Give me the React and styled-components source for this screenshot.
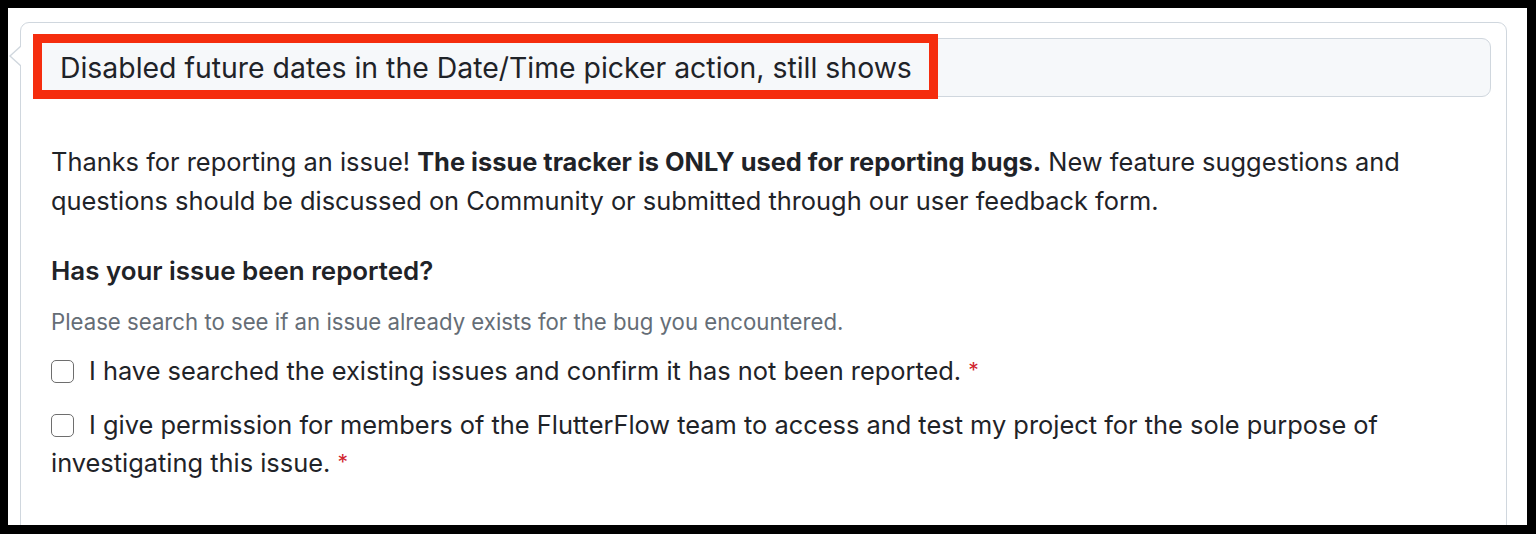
import React from "react";
import styled, { createGlobalStyle } from "styled-components";

const Global = createGlobalStyle`
  html, body { margin: 0; padding: 0; background: #000; }
  body { font-family: Inter, "Liberation Sans", sans-serif; color: #1f2328; }
`;

const Frame = styled.div`
  width: 1536px;
  height: 534px;
  box-sizing: border-box;
  padding: 8px 9px 9px 8px;
  background: #000;
`;

const Sheet = styled.div`
  height: 100%;
  background: #fff;
  overflow: hidden;
  padding: 14px 20px 0 12px;
  box-sizing: border-box;
`;

const Card = styled.div`
  position: relative;
  border: 1px solid #d0d7de;
  border-radius: 9px;
  padding: 15px 15px 40px 16px;
  background: #fff;
  min-height: 560px;
  box-sizing: border-box;

  &::before,
  &::after {
    content: "";
    position: absolute;
    top: 22px;
    width: 0;
    height: 0;
    border-style: solid;
  }
  &::before {
    left: -12px;
    border-width: 11px 12px 11px 0;
    border-color: transparent #d0d7de transparent transparent;
  }
  &::after {
    left: -10px;
    top: 23px;
    border-width: 10px 11px 10px 0;
    border-color: transparent #fff transparent transparent;
  }
`;

const TitleWrap = styled.div`
  position: relative;
`;

const TitleInput = styled.div`
  height: 59px;
  box-sizing: border-box;
  background: #f6f8fa;
  border: 1px solid #d0d7de;
  border-radius: 9px;
  display: flex;
  align-items: center;
  padding-left: 22px;
  font-size: 28.4px;
  color: #1f2328;
`;

const Highlight = styled.div`
  position: absolute;
  left: -4px;
  top: -4px;
  width: 905px;
  height: 65px;
  box-sizing: border-box;
  border: 9px solid #f52d0e;
  pointer-events: none;
`;

const Body = styled.div`
  padding: 0 14px;
`;

const Para = styled.p`
  margin: 45px 0 0;
  font-size: 25.4px;
  line-height: 39px;
`;

const Label = styled.h3`
  margin: 33px 0 0;
  font-size: 25.9px;
  line-height: 36px;
  font-weight: 600;
`;

const Hint = styled.p`
  margin: 18px 0 0;
  font-size: 22.2px;
  line-height: 30px;
  color: #656d76;
`;

const CheckRow = styled.label`
  display: block;
  margin-top: ${(p) => p.$gap}px;
  font-size: 25.4px;
  line-height: 38px;
`;

const Box = styled.span`
  display: inline-block;
  width: 23px;
  height: 23px;
  box-sizing: border-box;
  border: 1.5px solid #6e6e6e;
  border-radius: 5px;
  margin-right: 15px;
  vertical-align: -3px;
  background: #fff;
`;

const Req = styled.span`
  color: #d1242f;
  font-size: 21px;
  vertical-align: 2px;
`;

export default function App() {
  return (
    <>
      <Global />
      <Frame>
        <Sheet>
          <Card>
            <TitleWrap>
              <TitleInput>Disabled future dates in the Date/Time picker action, still shows</TitleInput>
              <Highlight />
            </TitleWrap>
            <Body>
              <Para>
                Thanks for reporting an issue! <strong>The issue tracker is ONLY used for reporting bugs.</strong>{" "}
                New feature suggestions and questions should be discussed on Community or submitted through our user
                feedback form.
              </Para>
              <Label>Has your issue been reported?</Label>
              <Hint>Please search to see if an issue already exists for the bug you encountered.</Hint>
              <CheckRow $gap={15}>
                <Box />I have searched the existing issues and confirm it has not been reported.{" "}
                <Req>*</Req>
              </CheckRow>
              <CheckRow $gap={16}>
                <Box />I give permission for members of the FlutterFlow team to access and test my project for the
                sole purpose of investigating this issue. <Req>*</Req>
              </CheckRow>
            </Body>
          </Card>
        </Sheet>
      </Frame>
    </>
  );
}
